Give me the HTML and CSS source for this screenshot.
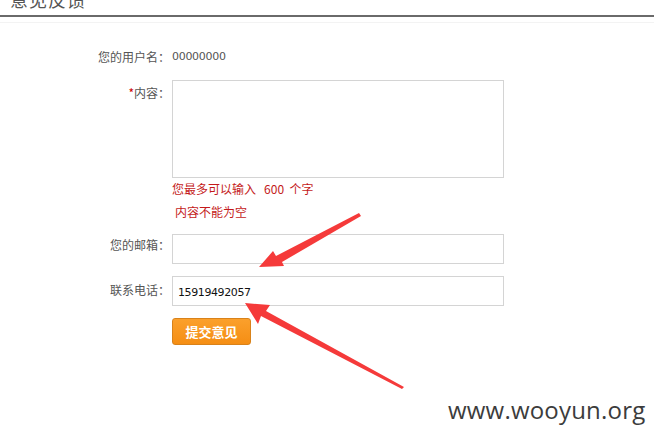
FILE: index.html
```html
<!DOCTYPE html>
<html>
<head>
<meta charset="utf-8">
<link rel="stylesheet" href="styles.css">
</head>
<body>
<div class="page">
  <div class="header"><h1 class="title">意见反馈</h1></div>
  <div class="subline"></div>
  <div class="form">
    <div class="row row-user">
      <div class="label">您的用户名：</div>
      <div class="value">00000000</div>
    </div>
    <div class="row row-content">
      <div class="label label-content"><span class="req">*</span>内容：</div>
      <div class="field">
        <div class="textarea"></div>
        <div class="err err1">您最多可以输入&nbsp;&nbsp; 600&nbsp; 个字</div>
        <div class="err err2">内容不能为空</div>
      </div>
    </div>
    <div class="row row-email">
      <div class="label label-email">您的邮箱：</div>
      <div class="input"></div>
    </div>
    <div class="row row-phone">
      <div class="label label-phone">联系电话：</div>
      <div class="input"><span class="input-text">15919492057</span></div>
    </div>
    <div class="row row-btn">
      <div class="label"></div>
      <button class="btn">提交意见</button>
    </div>
  </div>
  <svg class="arrows" width="654" height="443" viewBox="0 0 654 443">
    <polygon fill="#f53a3a" points="259,267 273,251 276,256 359,213 361,216 282,262 284,266"/>
    <polygon fill="#f53a3a" points="245,303 270,305 266,311 404,387 402,389 261,316 258,324"/>
  </svg>
  <div class="watermark">www.wooyun.org</div>
</div>
</body>
</html>
```
FILE: styles.css
```css
html, body {
  margin: 0;
  padding: 0;
  background: #fff;
}
.page {
  position: relative;
  width: 654px;
  height: 443px;
  overflow: hidden;
  font-family: "Noto Sans CJK SC", "Liberation Sans", sans-serif;
  font-size: 12px;
  color: #555;
}
.header {
  display: flow-root;
  height: 15px;
  border-bottom: 2px solid #6a6a6a;
  padding-left: 10px;
}
.title {
  margin: -13px 0 0 0;
  font-size: 18px;
  line-height: 24px;
  font-weight: normal;
  color: #555;
  letter-spacing: 1px;
}
.subline {
  height: 5px;
  border-bottom: 1px solid #f3f3f3;
}
.form {
  padding-top: 24px;
  display: flex;
  flex-direction: column;
}
.row {
  display: flex;
  align-items: flex-start;
}
.label {
  width: 170px;
  margin-right: 2px;
  text-align: right;
  line-height: 20px;
  flex-shrink: 0;
  color: #555;
}
.value {
  line-height: 20px;
  font-size: 11px;
  color: #555;
  font-family: "DejaVu Sans", sans-serif;
  letter-spacing: -0.3px;
}
.row-content { margin-top: 13px; }
.label-content { padding-top: 3px; }
.req { color: #c00; }
.textarea {
  width: 330px;
  height: 96px;
  border: 1px solid #d4d4d4;
}
.err {
  color: #c41a1a;
  line-height: 20px;
}
.err1 { margin-top: 1px; }
.err2 {
  margin-top: 3px;
  padding-left: 3px;
}
.row-email { margin-top: 12px; }
.label-email { padding-top: 1px; }
.row-phone { margin-top: 12px; }
.label-phone { padding-top: 4px; }
.input {
  width: 330px;
  height: 28px;
  border: 1px solid #d4d4d4;
  display: flex;
  align-items: center;
}
.input-text {
  padding-left: 5px;
  padding-top: 2px;
  font-family: "DejaVu Sans", sans-serif;
  font-size: 11px;
  letter-spacing: -0.4px;
  color: #111;
}
.row-btn { margin-top: 12px; }
.btn {
  width: 79px;
  height: 27px;
  padding: 0;
  border: 1px solid #d9821a;
  border-radius: 3px;
  background: linear-gradient(#fba02c, #f58e14);
  color: #fff;
  font-family: "Noto Sans CJK SC", sans-serif;
  font-size: 13px;
  font-weight: bold;
  line-height: 25px;
}
.arrows {
  position: absolute;
  left: 0;
  top: 0;
  pointer-events: none;
}
.watermark {
  position: absolute;
  left: 448px;
  top: 394px;
  font-family: "Open Sans", sans-serif;
  font-size: 24px;
  letter-spacing: 0.2px;
  line-height: 32px;
  color: #3c3c3c;
}
```
